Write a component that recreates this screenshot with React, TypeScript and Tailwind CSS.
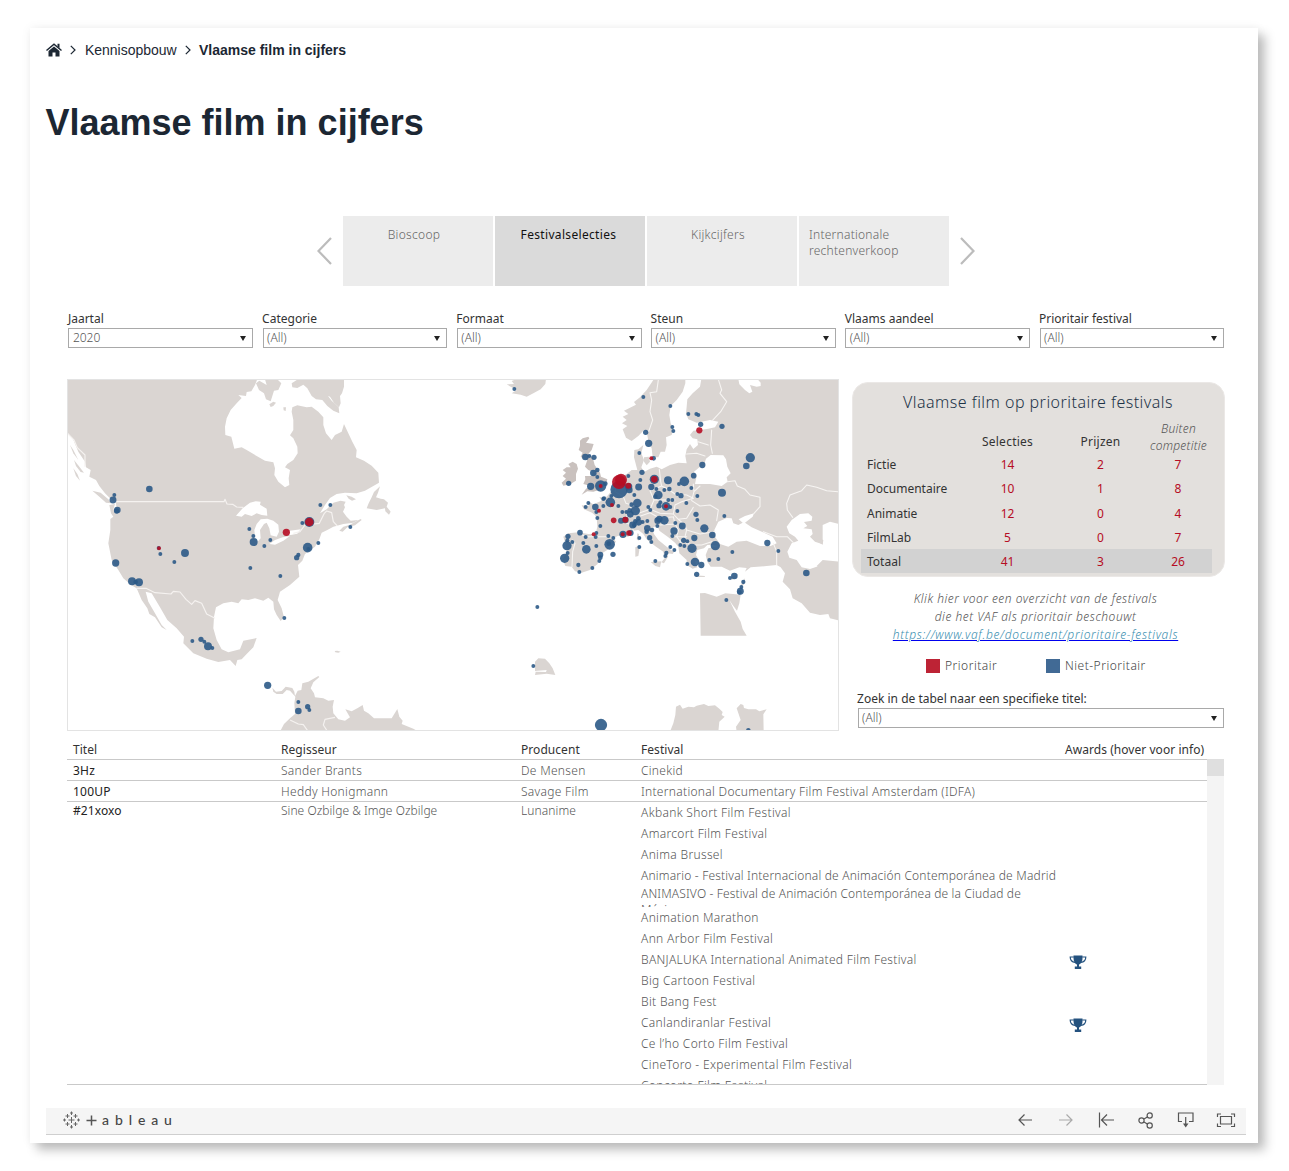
import React from "react";

type Dot = [number, number, number];

const NA_BLUE: Dot[] = [
  [268, 357, 9], [163, 375, 5], [159, 390, 9.5], [172, 420, 9], [170, 423, 7], [296, 534, 5], [301, 552, 5], [343, 576, 5],
  [375, 549, 11], [167, 579, 10], [216, 634, 11], [227, 636, 6], [237, 637, 11], [568, 477, 5], [580, 498, 5],
  [581, 516, 11], [571, 594, 5], [397, 813, 5], [423, 808, 7], [433, 815, 5], [444, 829, 11], [457, 834, 5],
  [781, 405, 5], [811, 405, 5], [727, 459, 5], [871, 471, 5], [748, 456, 14], [743, 533, 13.5], [745, 537, 5], [775, 519, 5],
  [715, 555, 5.5], [710, 563, 7], [631, 510, 5], [613, 528, 5], [661, 618, 5], [673, 744, 5], [623, 946, 10],
  [715, 996, 5], [743, 1010, 7], [748, 1020, 5], [715, 1023, 9],
];
const NA_RED: Dot[] = [[297, 535, 5], [748, 456, 12], [679, 487, 10]];

const EU_BLUE: Dot[] = [
  [43, 57, 5], [430, 81, 5], [511, 108, 5], [565, 132, 5], [589, 132, 5], [595, 135, 5], [517, 171, 5], [520, 183, 5],
  [437, 187, 7], [446, 220, 10], [418, 249, 5], [461, 265, 6], [602, 163, 7], [666, 169, 7], [751, 263, 13], [739, 288, 9],
  [607, 285, 8.5], [581, 317, 7.5], [666, 368, 11], [673, 438, 5], [256, 261, 9], [268, 258, 5], [282, 262, 7],
  [280, 309, 9], [292, 300, 6], [292, 321, 5], [206, 340, 7], [272, 349, 10], [302, 348, 16], [316, 341, 6], [426, 307, 7],
  [421, 330, 5], [385, 318, 5], [357, 359, 25], [386, 350, 10], [388, 360, 9], [416, 351, 9.5], [403, 375, 5], [463, 328, 13],
  [504, 331, 11], [553, 334, 13.5], [537, 342, 5], [454, 351, 8.5], [469, 357, 5], [493, 360, 5], [508, 357, 6],
  [574, 354, 5], [475, 375, 12], [466, 380, 6], [532, 372, 5], [543, 377, 7], [592, 378, 5], [505, 390, 5], [517, 390, 5],
  [559, 399, 5], [481, 397, 5], [477, 407, 7], [498, 409, 12], [511, 411, 5], [532, 423, 5], [331, 397, 13.5],
  [312, 385, 5.5], [310, 387, 5], [334, 378, 5], [310, 408, 5], [355, 408, 5], [286, 411, 9], [265, 399, 5], [257, 411, 5],
  [289, 426, 5], [292, 444, 5], [301, 468, 5], [395, 404, 6], [412, 399, 12], [367, 426, 5], [379, 426, 5], [389, 421, 6],
  [406, 422, 13], [391, 433, 9], [445, 411, 5], [451, 420, 5], [363, 452, 8], [376, 450, 9], [398, 465, 9.5],
  [406, 454, 6], [415, 445, 6], [416, 457, 9], [428, 456, 5], [442, 453, 5], [403, 466, 6], [240, 488, 7.5], [204, 499, 7],
  [202, 511, 5], [257, 501, 5], [289, 489, 5], [287, 501, 5], [325, 498, 5], [340, 504, 5], [369, 493, 10], [392, 489, 8],
  [442, 475, 9], [440, 485, 6], [456, 480, 6], [449, 503, 7], [454, 516, 5], [418, 504, 5], [418, 531, 5], [473, 452, 9],
  [478, 447, 9], [493, 451, 12], [472, 468, 5], [526, 459, 5], [547, 468, 9.5], [522, 483, 10], [517, 498, 5],
  [588, 433, 7], [592, 450, 5], [613, 475, 11.5], [637, 495, 9], [583, 504, 8.5], [551, 511, 7], [562, 514, 5],
  [541, 525, 5], [553, 528, 5], [511, 531, 5], [523, 540, 5], [646, 527, 13], [576, 535, 13], [802, 519, 8.5], [835, 543, 5],
  [201, 527, 13], [217, 516, 5], [250, 519, 5], [259, 538, 12], [289, 528, 5], [329, 523, 15], [326, 521, 6], [203, 549, 5],
  [194, 565, 13], [301, 554, 8], [301, 563, 6], [298, 573, 5], [339, 553, 7], [235, 585, 5.5], [238, 606, 5], [277, 594, 5],
  [466, 573, 5], [499, 549, 5.5], [496, 558, 5], [585, 576, 12], [604, 585, 8.5], [562, 582, 5], [590, 613, 7],
  [628, 570, 5], [655, 567, 5], [697, 546, 5], [703, 618, 9], [690, 624, 5], [730, 636, 5.5], [724, 651, 5], [721, 664, 9.5],
  [718, 667, 6], [919, 609, 9], [679, 690, 5], [112, 711, 5], [100, 888, 5], [303, 1065, 17.5], [745, 1081, 6],
];
const EU_RED: Dot[] = [
  [357, 336, 20], [363, 329, 17], [385, 347, 8], [463, 328, 9], [302, 348, 5], [454, 265, 5], [598, 181, 8.5], [336, 405, 5],
  [297, 422, 5], [341, 451, 7.5], [376, 449, 8], [498, 409, 5], [281, 493, 5], [368, 493, 5], [387, 489, 7.5],
];

const poly = (pts: string) => <polygon points={pts} strokeLinejoin="round" />;

function Dots({ items, color, opacity }: { items: Dot[]; color: string; opacity: number }) {
  return (
    <g fill={color} fillOpacity={opacity}>
      {items.map(([x, y, r], i) => (
        <circle key={i} cx={x} cy={y} r={r + 0.9} />
      ))}
    </g>
  );
}

function FestivalMap() {
  return (
    <svg viewBox="68 380 770 350" className="block h-[350px] w-[770px]" aria-label="Kaart met festivals">
      {/* The Americas */}
      <g transform="translate(60 370) scale(0.33333)">
        <g fill="#dad5d2">
          {poly("22,27 592,27 585,45 574,64 560,66 558,78 535,75 545,84 530,100 512,120 500,145 495,170 496,195 514,200 523,236 545,232 560,240 590,258 615,272 640,277 645,295 643,315 655,335 675,352 688,345 686,325 690,300 675,292 682,282 700,270 713,250 712,230 700,205 690,196 700,180 700,150 695,125 697,112 712,106 740,112 755,110 775,125 790,142 790,165 798,190 815,210 825,195 845,185 852,162 865,190 877,215 890,240 888,262 912,272 935,287 955,308 957,338 940,348 915,362 890,370 855,368 830,372 810,384 795,405 780,430 800,418 820,398 842,392 857,395 852,405 855,412 849,425 860,440 872,452 895,450 880,458 850,462 820,470 802,480 785,488 778,508 765,530 735,552 727,572 714,585 718,620 690,645 660,665 653,690 665,715 672,742 662,753 650,735 642,718 640,695 625,683 610,692 585,685 565,690 545,688 535,700 515,695 490,700 468,712 462,740 460,775 470,810 485,838 505,847 540,838 550,812 590,804 580,832 560,852 545,868 532,870 527,888 510,870 475,876 440,866 400,850 370,820 372,800 350,775 322,750 300,712 275,670 257,665 265,695 285,730 305,765 320,780 305,772 285,742 268,732 262,715 245,690 230,655 213,645 190,625 175,600 155,570 145,520 151,480 151,447 160,440 153,430 148,405 165,402 160,418 170,425 168,398 150,385 135,370 118,348 108,330 88,320 92,300 78,292 75,275 55,245 38,205 22,188")}
          {poly("97,362 122,368 145,388 155,400 138,398 118,380")}
          {poly("30,225 40,240 55,270 40,250")}
          {poly("40,295 52,312 60,332 48,318")}
          {poly("42,270 58,290 72,308 62,306 48,288")}
          {poly("695,40 715,27 852,27 852,50 846,70 840,78 842,100 837,112 822,98 810,80 804,78 815,92 836,112 838,130 820,122 802,108 787,90 768,88 755,78 742,55 730,44 712,54 697,52")}
          {poly("588,40 598,32 620,45 615,28 652,28 664,40 655,60 642,62 637,78 632,94 618,88 612,70 597,60")}
          {poly("628,103 640,95 648,98 640,108 632,111")}
          {poly("670,112 678,112 677,123 671,121")}
          {poly("920,415 926,400 935,382 942,366 960,349 954,368 948,382 962,386 972,388 984,398 980,410 992,425 987,434 976,424 975,415 950,420")}
          {poly("838,482 850,470 868,465 902,447 905,450 885,466 862,472 848,485")}
          {poly("859,376 875,380 888,388 876,392 866,386")}
          {poly("824,843 832,842 842,845 835,848 826,847")}
          {poly("637,953 648,965 665,963 677,950 697,954 703,965 705,978 713,962 724,960 727,940 745,935 775,918 778,921 760,937 752,955 762,970 765,982 790,985 805,992 822,990 818,1010 820,1030 835,1048 855,1052 870,1042 862,1028 856,1018 875,1024 892,1015 908,1005 912,1022 925,1030 942,1045 995,1045 1012,1017 1018,1040 1028,1052 1025,1062 1060,1076 1075,1085 660,1085 672,1062 690,1045 705,1032 703,1000 706,980 690,962 680,960 668,972 650,972 640,965")}
        </g>
        <g fill="#ffffff">
          {poly("528,437 548,415 570,398 587,394 602,395 600,404 620,416 622,437 605,435 590,430 575,438 555,432 545,440")}
          {poly("583,480 590,462 602,448 622,446 640,452 655,464 657,485 650,500 632,496 628,475 620,458 612,462 600,480 602,505 594,514 586,508")}
          {poly("628,522 645,510 668,502 690,498 670,512 645,524")}
          {poly("674,493 690,482 722,478 712,491 692,495")}
        </g>
        <g fill="none" stroke="#f5f2f0" strokeWidth="3.5" strokeLinejoin="round">
          <path d="M165 395H492L495 388L501 402L518 403L530 411L550 412M22 190L42 210L52 233L75 255L75 290M230 655L258 655L285 668L333 672L340 664L360 666L378 688L395 703L405 692L425 700L440 732L465 745M700 490L720 485L735 465L778 460L793 430L800 423L815 428L820 455L832 468" />
          <path d="M690 1050L715 1062L730 1064L745 1085M803 1085L790 1065L795 1048L825 1042" />
        </g>
        <Dots items={NA_BLUE} color="#2c5a87" opacity={0.9} />
        <Dots items={NA_RED} color="#b60d24" opacity={0.9} />
      </g>

      {/* Europe, the Middle East and Africa */}
      <g transform="translate(500 370) scale(0.33333)">
        <g fill="#dad5d2">
          {poly("20,43 42,42 35,33 50,27 138,27 136,42 122,58 100,70 80,80 62,74 35,70 50,60 35,52")}
          {poly("462,27 440,60 420,82 402,96 408,104 372,122 385,132 368,140 380,150 366,160 382,168 368,178 378,203 395,213 415,198 432,180 440,185 445,212 455,235 458,262 475,262 482,245 495,245 500,225 498,202 515,195 520,178 512,160 508,135 512,108 530,90 548,65 556,40 556,27")}
          {poly("604,27 600,50 578,70 562,88 560,110 558,130 565,148 590,158 630,150 655,155 645,172 625,176 600,180 580,182 570,195 578,205 592,208 594,225 580,237 570,222 560,238 556,258 560,280 535,278 510,285 485,298 470,290 450,296 432,306 424,292 432,270 424,250 430,225 415,238 403,240 402,262 408,285 412,300 395,300 380,312 362,322 352,345 330,368 320,380 298,382 305,392 280,403 262,393 266,408 245,406 252,418 276,428 290,440 292,470 287,491 265,492 235,487 205,490 190,500 198,525 200,545 188,568 196,588 215,590 225,604 245,608 270,600 293,582 298,555 330,535 348,515 340,504 355,497 385,500 400,482 415,480 430,492 440,508 465,528 490,545 494,565 484,577 492,580 504,560 502,550 518,552 522,546 500,530 475,510 462,492 456,475 472,466 478,482 505,502 525,518 535,530 538,550 560,570 560,585 578,596 592,592 584,572 600,576 588,555 592,540 612,535 622,525 640,525 655,528 625,535 617,555 622,575 632,590 665,590 690,602 718,592 740,594 735,605 752,592 800,588 830,585 842,592 855,610 848,635 870,658 878,685 905,700 930,728 960,735 985,732 990,745 1018,752 1018,27")}
          {poly("620,572 640,568 632,582")}
          {poly("432,262 446,260 450,275 440,286 432,275")}
          {poly("412,490 417,492 416,512 410,508")}
          {poly("406,532 416,527 418,540 415,558 406,560")}
          {poly("452,576 484,574 480,592 466,588")}
          {poly("583,616 615,618 614,621 590,621")}
          {poly("690,624 714,612 708,624 696,629")}
          {poly("600,670 615,669 650,680 676,670 722,674 718,700 711,722 698,705 688,690 705,725 722,755 728,777 740,797 602,797")}
          {poly("718,672 720,650 734,625 736,635 726,650 724,672")}
          {poly("105,903 105,875 115,865 135,866 148,880 158,895 166,915 140,911 105,915 107,905 138,906 140,900")}
          {poly("510,1085 520,1060 526,1035 528,1010 540,1004 548,1016 565,1010 582,1012 590,1007 612,1002 625,1008 645,1006 658,1016 668,1026 665,1035 674,1040 658,1055 655,1085")}
          {poly("710,1085 708,1070 722,1050 710,1015 722,1002 730,1005 732,1014 745,1018 768,1018 778,1024 800,1018 790,1033 791,1085")}
        </g>
        <g fill="#c9c1be">
          {poly("240,228 240,212 248,205 265,200 268,205 258,218 281,222 275,240 265,252 278,262 284,285 300,308 303,320 322,328 318,343 305,358 280,365 262,364 245,374 258,356 272,348 250,342 256,328 255,318 276,318 278,305 265,300 255,290 262,270 248,265 242,260 248,248 236,240")}
          {poly("188,300 200,292 212,292 205,282 218,275 230,282 234,296 228,312 228,332 210,343 190,347 185,338 198,326 188,318 198,308")}
        </g>
        <g fill="#ffffff">
          {poly("600,290 612,285 618,266 632,255 670,256 678,268 682,290 692,310 680,322 683,335 665,348 630,342 585,342 590,317 582,305")}
          {poly("715,27 718,43 735,60 748,70 757,65 750,45 770,50 782,48 782,38 772,27")}
          {poly("645,500 643,480 655,455 680,444 695,445 700,460 715,465 728,458 716,448 735,438 762,430 758,440 735,458 755,472 792,488 818,500 830,520 812,528 780,528 740,512 710,515 685,530 660,522")}
          {poly("868,490 860,470 875,450 900,432 925,430 937,440 935,452 912,456 922,468 910,475 935,478 938,492 930,500 945,515 968,523 968,465 990,455 1018,462 1018,580 975,573 950,590 930,597 905,592 890,570 868,563 862,545 875,520 895,512 885,500")}
          {poly("536,205 550,190 555,200 540,210")}
          {poly("460,562 476,567 466,575")}
        </g>
        <polygon points="968,570 1018,575 1018,590 950,588" fill="#dad5d2" />
        <polygon points="955,505 970,510 968,524 958,518" fill="#dad5d2" />
        <g fill="none" stroke="#f7f5f3" strokeWidth="3.2" strokeLinejoin="round" strokeLinecap="round">
          <path d="M475 30L470 65L450 68L455 90L450 125L458 150L446 185M655 28L665 60L660 70L680 95L662 125L637 152M635 180L634 195L632 225L637 250M594 215L625 225M560 252L590 250L615 258" />
          <path d="M478 298L482 335L485 348M485 348L505 358L525 372L560 375L580 385M485 348L450 362L462 390L450 418L420 428L385 432M350 345L345 365L370 380L378 400L395 405L385 432L370 455L395 465L400 482M462 390L490 390L525 390M580 342L582 365L575 392L600 408L630 405L655 420L650 452M682 335L705 332L712 348L735 358L750 375L780 382L780 410L762 430M582 365L600 348M580 385L545 395L525 405L520 432L535 448L560 445L580 412M450 418L480 430L520 432M415 440L450 428L480 445L520 440M520 440L525 462L480 465M535 448L555 465L560 480L600 492L645 485M560 480L555 500L560 520L575 525L605 525L635 515M525 462L535 480L530 500L545 520M525 500L560 500M790 485L830 500L862 500L880 518M820 520L830 545L830 585M218 510L225 520L218 545L216 590M235 492L265 500L290 500L325 500" />
          <path d="M878 442L862 420L860 400L870 375L905 362L920 345L950 352L980 362L1014 365" />
        </g>
        <Dots items={EU_BLUE} color="#2c5a87" opacity={0.9} />
        <Dots items={EU_RED} color="#b60d24" opacity={0.9} />
      </g>
    </svg>
  );
}

function Select({ label, value }: { label: string; value: string }) {
  return (
    <div className="flex flex-col">
      <div className="-ml-[0.500px] h-[18px] text-[12px] leading-[18px] whitespace-nowrap text-[#333]">{label}</div>
      <div className="flex h-5 items-center justify-between border border-[#a9a9a9] pr-[6px] pl-[3.500px] text-[12px] leading-[18px] font-light text-[#555]">
        <span>{value}</span>
        <svg viewBox="0 0 6 5" className="h-[5px] w-[6px]"><path d="M0 0H6L3 5Z" fill="#222" /></svg>
      </div>
    </div>
  );
}

const FILTERS = [["Jaartal", "2020"], ["Categorie", "(All)"], ["Formaat", "(All)"], ["Steun", "(All)"], ["Vlaams aandeel", "(All)"], ["Prioritair festival", "(All)"]];

const SCORES = [["Fictie", "14", "2", "7"], ["Documentaire", "10", "1", "8"], ["Animatie", "12", "0", "4"], ["FilmLab", "5", "0", "7"]];

const FESTIVALS = [
  "Akbank Short Film Festival", "Amarcort Film Festival", "Anima Brussel",
  "Animario - Festival Internacional de Animación Contemporánea de Madrid",
  "ANIMASIVO - Festival de Animación Contemporánea de la Ciudad de México",
  "Animation Marathon", "Ann Arbor Film Festival", "BANJALUKA International Animated Film Festival", "Big Cartoon Festival",
  "Bit Bang Fest", "Canlandiranlar Festival", "Ce l’ho Corto Film Festival", "CineToro - Experimental Film Festival", "Concorto Film Festival",
];

function festivalClass(name: string) {
  if (name.startsWith("ANIMASIVO")) return "h-[21px] overflow-hidden pr-6 leading-[16px] tracking-[0.15px]";
  if (name.startsWith("Animario")) return "h-[21px] leading-[21px] tracking-[0.19px] whitespace-nowrap";
  return "h-[21px] leading-[21px] tracking-[0.33px] whitespace-nowrap";
}

function Trophy() {
  return (
    <svg viewBox="0 0 18 15" className="mt-[6px] ml-[3.500px] h-[15px] w-[18px]">
      <path d="M4.500 0.500H13.500V3C13.500 7 11.500 9 10 9.600V11.500H12.200V14H5.800V11.500H8V9.600C6.500 9 4.500 7 4.500 3Z" fill="#24527f" />
      <path d="M4.800 2H1.200C1.200 5 3 7 6.200 7.500M13.200 2H16.800C16.800 5 15 7 11.800 7.500" fill="none" stroke="#24527f" strokeWidth="1.200" />
    </svg>
  );
}

function Chevron() {
  return (
    <svg viewBox="0 0 6 10" className="h-[10px] w-[6px]">
      <path d="M0.800 0.800L5 5L0.800 9.200" fill="none" stroke="#1c2733" strokeWidth="1.200" />
    </svg>
  );
}

const TABS = ["Bioscoop", "Festivalselecties", "Kijkcijfers"];

export default function App() {
  return (
    <div className="h-[1171px] w-[1289px] bg-white pt-[28px] pl-[30px] font-['Noto_Sans',sans-serif]">
      <div className="flex h-[1115px] w-[1228px] flex-col bg-white px-4 shadow-[7px_7px_10px_rgba(0,0,0,0.25),0_0_10px_rgba(0,0,0,0.06)]">
        <nav className="flex h-[44px] items-center font-['Liberation_Sans',sans-serif] text-[14px] text-[#1c2733]">
          <svg viewBox="0 0 16 14" className="mr-[8px] h-[14px] w-4 shrink-0">
            <path d="M0.500 7.500L8 1.200L15.500 7.500" fill="none" stroke="#1c2733" strokeWidth="1.500" />
            <path d="M8 3.500L13.500 8V13.500H9.500V9.500H6.500V13.500H2.500V8ZM11.500 0.800H13.500V5L11.500 3.500Z" fill="#1c2733" />
          </svg>
          <Chevron />
          <span className="mr-[8px] ml-[9px] tracking-[-0.03px]">Kennisopbouw</span>
          <Chevron />
          <span className="ml-[8.500px] font-bold">Vlaamse film in cijfers</span>
        </nav>
        <h1 className="mt-[29px] -ml-[0.500px] h-[44px] font-['Liberation_Sans',sans-serif] text-[36px] leading-[44px] font-bold text-[#1c2733]">
          Vlaamse film in cijfers
        </h1>

        <div className="mt-[71px] flex h-[70px] items-center pl-[271px] text-[12px]">
          <svg viewBox="0 0 15 28" className="mr-[11px] h-7 w-[15px]"><path d="M14 1L1.500 14L14 27" fill="none" stroke="#bcbcbc" strokeWidth="2.200" /></svg>
          <div className="flex h-full gap-[2px]">
            {TABS.map((t) => (
              <div key={t} className={t === "Festivalselecties" ? "w-[150px] bg-[#dadada] pt-[11px] pr-[3px] text-center leading-4 tracking-[0.33px] text-[#111]" : "w-[150px] bg-[#ececec] pt-[11px] pr-[8px] text-center leading-4 font-light tracking-[0.3px] text-[#666]"}>
                {t}
              </div>
            ))}
            <div className="w-[150px] bg-[#ececec] pt-[11px] pl-[10px] leading-4 font-light tracking-[0.25px] text-[#666]">
              Internationale<br />rechtenverkoop
            </div>
          </div>
          <svg viewBox="0 0 15 28" className="ml-[11px] h-7 w-[15px]"><path d="M1 1L13.500 14L1 27" fill="none" stroke="#bcbcbc" strokeWidth="2.200" /></svg>
        </div>

        <div className="mt-6 ml-[22.400px] grid h-[38px] w-[1156px] grid-cols-6 gap-[9.400px]">
          {FILTERS.map(([l, v]) => <Select key={l} label={l} value={v} />)}
        </div>

        <div className="mt-[31px] ml-[21px] flex h-[352px]">
          <div className="h-[352px] w-[772px] shrink-0 border border-[#e3e3e3]"><FestivalMap /></div>
          <aside className="ml-[13px] flex w-[373px] flex-col pt-[3px]">
            <div className="h-[195px] rounded-[16px] border border-[#ebe8e6] bg-[#e3e0dd] pt-[8px] text-[12px] text-[#333]">
              <h2 className="h-[22px] pr-[1px] text-center text-[16px] leading-[22px] font-light tracking-[0.47px] text-[#1c3347]">Vlaamse film op prioritaire festivals</h2>
              <div className="mt-[7px] grid h-[36px] grid-cols-[108px_93px_93px_62px] overflow-hidden text-center tracking-[0.25px]">
                <span />
                <span className="pt-[13px] leading-[18px]">Selecties</span>
                <span className="pt-[13px] leading-[18px]">Prijzen</span>
                <span className="-mx-2 pl-[1px] leading-[17px] font-light text-[#555] italic">Buiten competitie</span>
              </div>
              <div className="-mt-[3px] text-[#333]">
                {SCORES.map((r) => (
                  <div key={r[0]} className="ml-[8px] grid h-[24.300px] w-[351px] grid-cols-[100px_93px_93px_62px] items-center text-center text-[#b60d24]">
                    <span className="pl-[6px] text-left text-[#333]">{r[0]}</span>
                    <span>{r[1]}</span><span>{r[2]}</span><span>{r[3]}</span>
                  </div>
                ))}
                <div className="-mt-[1px] ml-[8px] grid h-6 w-[351px] grid-cols-[100px_93px_93px_62px] items-center bg-[#d2d2d2] pt-[1px] text-center text-[#b60d24]">
                  <span className="pl-[6px] text-left text-[#333]">Totaal</span>
                  <span>41</span><span>3</span><span>26</span>
                </div>
              </div>
            </div>
            <div className="mt-[13px] -ml-[6px] text-center text-[12px] leading-[18px] font-light tracking-[0.5px] text-[#555] italic">
              Klik hier voor een overzicht van de festivals<br />die het VAF als prioritair beschouwt<br />
              <a className="tracking-[0.66px] text-[#3b8fb0] underline decoration-[#0000ee]">https://www.vaf.be/document/prioritaire-festivals</a>
            </div>
            <div className="mt-[13px] flex h-[18px] items-center pl-[74px] text-[12px] font-light tracking-[0.5px] text-[#444]">
              <i className="mr-[5px] size-[14px] bg-[#bd2335]" /><span className="w-[101px]">Prioritair</span>
              <i className="mr-[5px] size-[14px] bg-[#416a95]" /><span>Niet-Prioritair</span>
            </div>
            <div className="mt-[15px] mr-[1px] ml-[5.600px]"><Select label="Zoek in de tabel naar een specifieke titel:" value="(All)" /></div>
          </aside>
        </div>

        <div className="mt-[9px] ml-[21px] h-[345px] w-[1157px] text-[12px] tracking-[0.3px] text-[#333]">
          <div className="grid h-[19px] grid-cols-[208px_240px_120px_424px_1fr] pl-[6px] leading-[19px] tracking-[0.05px]">
            <span>Titel</span><span>Regisseur</span><span>Producent</span><span>Festival</span><span>Awards (hover voor info)</span>
          </div>
          <div className="flex h-[326px]">
            <div className="w-[1140px] overflow-hidden border-y border-[#c9c9c9] font-light text-[#555]">
              {[["3Hz", "Sander Brants", "De Mensen", "Cinekid"], ["100UP", "Heddy Honigmann", "Savage Film", "International Documentary Film Festival Amsterdam (IDFA)"]].map((r) => (
                <div key={r[0]} className="grid h-[21px] grid-cols-[208px_240px_120px_1fr] border-b border-[#c9c9c9] pl-[6px] leading-[21px]">
                  <span className="font-normal tracking-[0.2px] text-[#222]">{r[0]}</span><span>{r[1]}</span><span>{r[2]}</span><span>{r[3]}</span>
                </div>
              ))}
              <div className="grid grid-cols-[208px_240px_120px_424px_1fr] pl-[6px] leading-[18px]">
                <span className="font-normal tracking-[0.1px] text-[#222]">#21xoxo</span>
                <span className="tracking-[0.04px]">Sine Ozbilge & Imge Ozbilge</span>
                <span className="tracking-[0.1px]">Lunanime</span>
                <div>
                  {FESTIVALS.map((f) => (
                    <div key={f} className={festivalClass(f)}>{f}</div>
                  ))}
                </div>
                <div>
                  {FESTIVALS.map((f) => (
                    <div key={f} className="flex h-[21px]">{(f.startsWith("BANJALUKA") || f.startsWith("Canlandiranlar")) && <Trophy />}</div>
                  ))}
                </div>
              </div>
            </div>
            <div className="w-[17px] bg-[#f4f4f4]"><div className="h-[17px] bg-[#dfdfdf]" /></div>
          </div>
        </div>

        <footer className="mt-[23px] flex h-[27px] w-[1200px] shrink-0 items-center border-b border-[#cfcfcf] bg-[#f5f5f5] pb-[2px] pl-[16px]">
          <svg viewBox="0 0 20 18" className="h-[18px] w-5">
            <path d="M9.500 6V12M6.500 9H12.500M5.500 3V7M3.500 5H7.500M13.500 3V7M11.500 5H15.500M5.500 11V15M3.500 13H7.500M13.500 11V15M11.500 13H15.500M9.500 0.500V4M8 2H11M9.500 14V17.500M8 16H11M2.500 7.500V10.500M1 9H4M16.500 7.500V10.500M15 9H18" fill="none" stroke="#666" />
          </svg>
          <svg viewBox="0 0 11 11" className="ml-[4px] h-[11px] w-[11px]"><path d="M5.500 0.500V10.500M0.500 5.500H10.500" stroke="#555" strokeWidth="1.500" /></svg>
          <span className="ml-[5px] font-['Lato',sans-serif] text-[14px] leading-4 font-medium tracking-[5.900px] text-[#444]">ableau</span>
          <div className="ml-auto flex items-center gap-[20px] pr-[10px]">
            <svg viewBox="0 0 20 20" className="size-5" fill="none" stroke="#555"><path d="M16 10H3M8.500 4.500L3 10L8.500 15.500" strokeWidth="1.200" /></svg>
            <svg viewBox="0 0 20 20" className="size-5" fill="none" stroke="#aaa"><path d="M3 10H16M10.500 4.500L16 10L10.500 15.500" strokeWidth="1.200" /></svg>
            <svg viewBox="0 0 20 20" className="size-5" fill="none" stroke="#555"><path d="M3.500 2.500V17.500M18 10H5.500M11 4.500L5.500 10L11 15.500" strokeWidth="1.200" /></svg>
            <svg viewBox="0 0 20 20" className="size-5" fill="none" stroke="#555" strokeWidth="1.200"><circle cx="5.500" cy="10.500" r="2.600" /><circle cx="13.700" cy="5.500" r="2.600" /><circle cx="13.700" cy="15.500" r="2.600" /><path d="M8 9L11.300 7M8 12L11.300 14" /></svg>
            <svg viewBox="0 0 20 20" className="size-5" fill="none" stroke="#555" strokeWidth="1.200"><path d="M6 11.500H2.500V3H17V11.500H13M9.700 7V14" /><path d="M7 13.500H12.500L9.700 17.500Z" fill="#555" stroke="none" /></svg>
            <svg viewBox="0 0 20 20" className="size-5" fill="none" stroke="#555" strokeWidth="1.200"><path d="M4.500 6.500H15.500V14H4.500ZM1.500 7V4H5M15 4H18.500V7M18.500 13.500V16.500H15M5 16.500H1.500V13.500" /></svg>
          </div>
        </footer>
      </div>
    </div>
  );
}
